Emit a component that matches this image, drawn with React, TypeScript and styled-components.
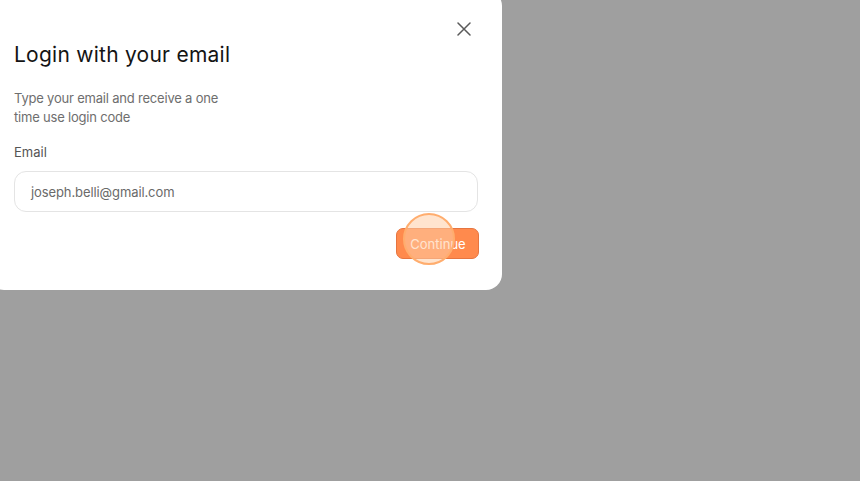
import React from "react";
import styled, { createGlobalStyle } from "styled-components";

const Global = createGlobalStyle`
  html, body { margin: 0; padding: 0; }
  body {
    background: #9f9f9f;
    font-family: Inter, "Noto Sans", sans-serif;
    width: 860px;
    height: 481px;
    overflow: hidden;
  }
`;

const Modal = styled.div`
  position: relative;
  box-sizing: border-box;
  margin: -10px 0 0 -12px;
  width: 514px;
  height: 300px;
  background: #ffffff;
  border-radius: 16px;
  padding: 50px 24px 31px 26px;
  display: flex;
  flex-direction: column;
`;

const CloseButton = styled.button`
  position: absolute;
  top: 30px;
  right: 29px;
  width: 18px;
  height: 18px;
  padding: 0;
  border: none;
  background: transparent;
  display: flex;
  align-items: center;
  justify-content: center;
  color: #5a5a5a;
`;

const Title = styled.h1`
  margin: 0;
  font-size: 21px;
  line-height: 30px;
  font-weight: 400;
  color: #141414;
  letter-spacing: 0.25px;
`;

const Description = styled.p`
  margin: 19px 0 0;
  max-width: 212px;
  font-size: 13px;
  line-height: 19px;
  color: #6e6e6e;
  letter-spacing: -0.2px;
`;

const Label = styled.label`
  margin-top: 16px;
  font-size: 13px;
  line-height: 19px;
  color: #555555;
`;

const Input = styled.div`
  box-sizing: border-box;
  margin-top: 9px;
  height: 41px;
  width: 464px;
  border: 1px solid #e4e4e4;
  border-radius: 12px;
  padding: 0 16px;
  display: flex;
  align-items: center;
  font-size: 13px;
  color: #6a6a6a;
  letter-spacing: -0.1px;
`;

const Actions = styled.div`
  margin-top: 16px;
  width: 465px;
  display: flex;
  justify-content: flex-end;
`;

const Button = styled.button`
  position: relative;
  box-sizing: border-box;
  height: 31px;
  width: 83px;
  border: 1px solid #e67540;
  border-radius: 7px;
  background: #ff8a4d;
  color: #ffffff;
  font-family: inherit;
  font-size: 13px;
  padding: 0 0 0 1px;
`;

const ClickRing = styled.span`
  position: absolute;
  left: 6px;
  top: -16px;
  width: 48px;
  height: 48px;
  border-radius: 50%;
  border: 2px solid #ffad6e;
  background: rgba(255, 205, 165, 0.55);
  pointer-events: none;
`;

export default function App() {
  return (
    <>
      <Global />
      <Modal>
        <CloseButton aria-label="Close">
          <svg width="14" height="14" viewBox="0 0 14 14" fill="none">
            <path d="M1 1L13 13M13 1L1 13" stroke="currentColor" strokeWidth="1.5" strokeLinecap="round" />
          </svg>
        </CloseButton>
        <Title>Login with your email</Title>
        <Description>Type your email and receive a one time use login code</Description>
        <Label>Email</Label>
        <Input>joseph.belli@gmail.com</Input>
        <Actions>
          <Button>
            Continue
            <ClickRing />
          </Button>
        </Actions>
      </Modal>
    </>
  );
}
